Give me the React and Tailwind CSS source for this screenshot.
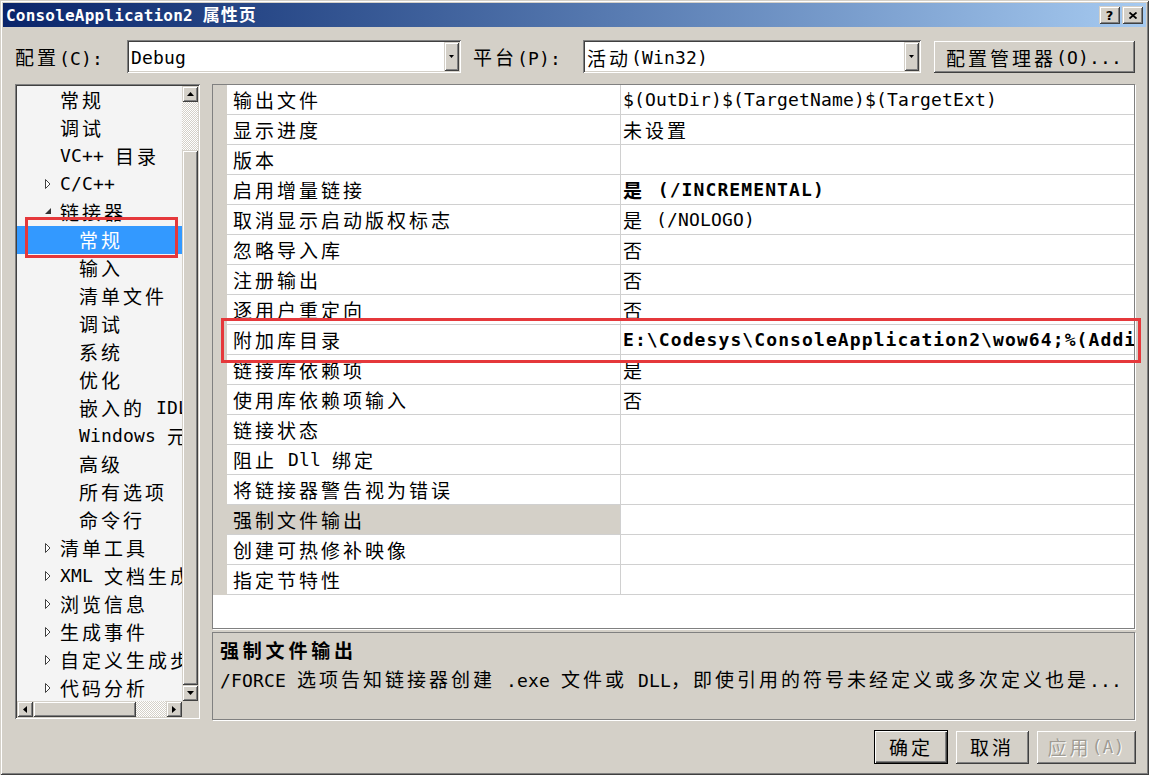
import React from "react";

const ASCII = /^[\x00-\x7f]+$/;

function Txt({ t, bold = false, lat, cjk }) {
  const parts = t.split(/([\x00-\x7f]+)/).filter(Boolean);
  const latC = lat || (bold ? "text-[18px] tracking-[1.1px]" : "text-[18px] tracking-[0.16px]");
  const cjkC = cjk || (bold ? "text-[19px] tracking-[3.8px]" : "text-[19px] tracking-[3px]");
  return (
    <>
      {parts.map((p, i) =>
        ASCII.test(p) ? (
          <span key={i} className={"font-['DejaVu_Sans_Mono',monospace] whitespace-pre " + latC}>
            {p}
          </span>
        ) : (
          <span key={i} className={"font-['Noto_Sans_CJK_SC',sans-serif] whitespace-pre " + cjkC}>
            {p}
          </span>
        )
      )}
    </>
  );
}

const RAISED =
  "bg-[#d4d0c8] shadow-[inset_1px_1px_0_#d4d0c8,inset_-1px_-1px_0_#404040,inset_2px_2px_0_#ffffff,inset_-2px_-2px_0_#808080]";
const SUNKEN =
  "shadow-[inset_1px_1px_0_#808080,inset_-1px_-1px_0_#ffffff,inset_2px_2px_0_#404040,inset_-2px_-2px_0_#d4d0c8]";
const DITHER =
  "bg-[repeating-conic-gradient(#d4d0c8_0_25%,#ffffff_0_50%)] bg-[length:2px_2px]";

function Arrow({ dir }) {
  const d = {
    up: "M3.5 0 L7 4 L0 4 Z",
    down: "M0 0 L7 0 L3.5 4 Z",
    left: "M4 0 L4 7 L0 3.5 Z",
    right: "M0 0 L4 3.5 L0 7 Z",
  }[dir];
  const vert = dir === "up" || dir === "down";
  return (
    <svg width={vert ? 7 : 4} height={vert ? 4 : 7} viewBox={vert ? "0 0 7 4" : "0 0 4 7"}>
      <path d={d} fill="#000" />
    </svg>
  );
}

function ScrollBtn({ dir }) {
  return (
    <div className={"w-[16px] h-[16px] shrink-0 flex items-center justify-center " + RAISED}>
      <Arrow dir={dir} />
    </div>
  );
}

function Combo({ w, text }) {
  return (
    <div className={"h-[33px] bg-white flex items-stretch p-[2px] " + SUNKEN + " " + w}>
      <div className="flex-1 flex items-center pl-[2px] pt-[3px] leading-[22px] text-black">
        <Txt t={text} />
      </div>
      <div className={"w-[15px] flex items-center justify-center " + RAISED}>
        <svg width="5" height="3" viewBox="0 0 5 3">
          <path d="M0 0 L5 0 L2.5 3 Z" fill="#000" />
        </svg>
      </div>
    </div>
  );
}

const tree = [
  { t: "常规", l: 1 },
  { t: "调试", l: 1 },
  { t: "VC++ 目录", l: 1 },
  { t: "C/C++", l: 1, a: "c" },
  { t: "链接器", l: 1, a: "e" },
  { t: "常规", l: 2, sel: true },
  { t: "输入", l: 2 },
  { t: "清单文件", l: 2 },
  { t: "调试", l: 2 },
  { t: "系统", l: 2 },
  { t: "优化", l: 2 },
  { t: "嵌入的 IDL", l: 2 },
  { t: "Windows 元数据", l: 2 },
  { t: "高级", l: 2 },
  { t: "所有选项", l: 2 },
  { t: "命令行", l: 2 },
  { t: "清单工具", l: 1, a: "c" },
  { t: "XML 文档生成器", l: 1, a: "c" },
  { t: "浏览信息", l: 1, a: "c" },
  { t: "生成事件", l: 1, a: "c" },
  { t: "自定义生成步骤", l: 1, a: "c" },
  { t: "代码分析", l: 1, a: "c" },
];

const rows = [
  ["输出文件", "$(OutDir)$(TargetName)$(TargetExt)"],
  ["显示进度", "未设置"],
  ["版本", ""],
  ["启用增量链接", "是 (/INCREMENTAL)", true],
  ["取消显示启动版权标志", "是 (/NOLOGO)"],
  ["忽略导入库", "否"],
  ["注册输出", "否"],
  ["逐用户重定向", "否"],
  ["附加库目录", "E:\\Codesys\\ConsoleApplication2\\wow64;%(AdditionalLibraryDirectories)", true],
  ["链接库依赖项", "是"],
  ["使用库依赖项输入", "否"],
  ["链接状态", ""],
  ["阻止 Dll 绑定", ""],
  ["将链接器警告视为错误", ""],
  ["强制文件输出", "", false, true],
  ["创建可热修补映像", ""],
  ["指定节特性", ""],
];

function TreeItem({ item }) {
  return (
    <div
      className={
        "h-[28px] flex items-center leading-[22px] whitespace-nowrap " +
        (item.sel ? "bg-[#3399ff] text-white" : "text-black")
      }
    >
      {item.l === 1 ? (
        <>
          <div className="w-[43px] shrink-0 flex justify-end pr-[9px]">
            {item.a === "c" && (
              <svg width="6" height="10" viewBox="0 0 6 10">
                <path d="M0.5 0.5 L5 5 L0.5 9.5 Z" fill="#ffffff" stroke="#404040" strokeWidth="1" />
              </svg>
            )}
            {item.a === "e" && (
              <svg width="6" height="6" viewBox="0 0 6 6" className="-mt-[2px]">
                <path d="M6 0 L6 6 L0 6 Z" fill="#333333" />
              </svg>
            )}
          </div>
          <Txt t={item.t} />
        </>
      ) : (
        <>
          <div className="w-[62px] shrink-0" />
          <Txt t={item.t} />
        </>
      )}
    </div>
  );
}

function Button({ children, def, disabled, w }) {
  return (
    <div
      className={
        "flex items-center justify-center leading-[22px] " +
        w +
        " " +
        (def
          ? "bg-[#d4d0c8] border border-black shadow-[inset_1px_1px_0_#ffffff,inset_-1px_-1px_0_#404040,inset_-2px_-2px_0_#808080]"
          : RAISED) +
        (disabled ? " text-[#a09c94] [text-shadow:1px_1px_0_#ffffff]" : " text-black")
      }
    >
      {children}
    </div>
  );
}

export default function App() {
  return (
    <div
      className={
        "relative w-[1149px] h-[775px] bg-[#d4d0c8] p-[3px] flex flex-col overflow-hidden font-['Noto_Sans_CJK_SC',sans-serif] shadow-[inset_1px_1px_0_#d4d0c8,inset_-1px_-1px_0_#404040,inset_2px_2px_0_#ffffff,inset_-2px_-2px_0_#808080]"
      }
    >
      {/* Title bar */}
      <div className="h-[24px] shrink-0 flex items-center justify-between bg-linear-to-r from-[#0a246a] to-[#a6caf0] pl-[3px] pr-[3px]">
        <div className="text-white font-bold leading-[24px] whitespace-nowrap">
          <Txt t="ConsoleApplication2 属性页" lat="text-[16px] tracking-[0.2px]" cjk="text-[17px] tracking-[1px]" />
        </div>
        <div className="flex gap-[2px]">
          <div className={"w-[21px] h-[18px] flex items-center justify-center " + RAISED}>
            <span className="font-['DejaVu_Sans',sans-serif] font-bold text-[13px] leading-none text-black">?</span>
          </div>
          <div className={"w-[21px] h-[18px] flex items-center justify-center " + RAISED}>
            <svg width="8" height="7" viewBox="0 0 8 7">
              <path d="M0.5 0.5 L7.5 6.5 M7.5 0.5 L0.5 6.5" stroke="#000" strokeWidth="1.8" />
            </svg>
          </div>
        </div>
      </div>

      {/* Config row */}
      <div className="mt-[13px] h-[33px] shrink-0 flex items-center pl-[12px]">
        <div className="w-[112px] pt-[3px] leading-[22px] text-black whitespace-nowrap">
          <Txt t="配置(C):" />
        </div>
        <Combo w="w-[334px]" text="Debug" />
        <div className="w-[122px] pl-[12px] pt-[3px] leading-[22px] text-black whitespace-nowrap">
          <Txt t="平台(P):" />
        </div>
        <Combo w="w-[338px]" text="活动(Win32)" />
        <div className="w-[12px]" />
        <Button w="w-[202px] h-[33px] pt-[3px]">
          <Txt t="配置管理器(O)..." />
        </Button>
      </div>

      {/* Main area */}
      <div className="mt-[11px] flex pl-[12px]">
        {/* Tree */}
        <div className={"w-[185px] h-[635px] bg-[#f4f4f4] p-[2px] flex flex-col " + SUNKEN}>
          <div className="flex flex-1 min-h-0">
            <div className="flex-1 min-w-0 overflow-hidden">
              {tree.map((it, i) => (
                <TreeItem key={i} item={it} />
              ))}
            </div>
            <div className="w-[16px] flex flex-col">
              <ScrollBtn dir="up" />
              <div className={"h-[48px] " + DITHER} />
              <div className={"flex-1 " + RAISED} />
              <ScrollBtn dir="down" />
            </div>
          </div>
          <div className="h-[16px] flex">
            <ScrollBtn dir="left" />
            <div className={"w-[103px] " + RAISED} />
            <div className={"flex-1 " + DITHER} />
            <ScrollBtn dir="right" />
            <div className="w-[16px] bg-[#d4d0c8]" />
          </div>
        </div>

        {/* Right column */}
        <div className="ml-[12px] w-[923px] flex flex-col">
          <div className="h-[545px] border border-[#808080] bg-white shadow-[1px_1px_0_#ffffff] overflow-hidden">
            <div className="flex">
              <div className="w-[14px] shrink-0 bg-[#d4d0c8]" />
              <div className="flex-1 min-w-0">
                {rows.map(([name, val, bold, selName], i) => (
                  <div key={i} className="h-[30px] flex border-b border-[#d0d0d0] leading-[22px] text-black">
                    <div
                      className={
                        "w-[394px] shrink-0 border-r border-[#d0d0d0] pl-[6px] flex items-center whitespace-nowrap " +
                        (selName ? "bg-[#d4d0c8]" : "")
                      }
                    >
                      <Txt t={name} />
                    </div>
                    <div
                      className={
                        "flex-1 min-w-0 pl-[2px] flex items-center whitespace-nowrap overflow-hidden " +
                        (bold ? "font-bold" : "")
                      }
                    >
                      <Txt t={val} bold={!!bold} />
                    </div>
                  </div>
                ))}
              </div>
            </div>
          </div>

          <div className="mt-[3px] h-[88px] border border-[#808080] shadow-[1px_1px_0_#ffffff] px-[7px] pt-[3px] leading-[28px] text-black overflow-hidden">
            <div className="font-bold whitespace-nowrap">
              <Txt t="强制文件输出" bold />
            </div>
            <div className="whitespace-nowrap">
              <Txt t="/FORCE 选项告知链接器创建 .exe 文件或 DLL，即使引用的符号未经定义或多次定义也是..." />
            </div>
          </div>
        </div>
      </div>

      {/* Buttons */}
      <div className="mt-[10px] flex justify-end gap-[7px] pr-[10px]">
        <Button def w="w-[74px] h-[34px]">
          <Txt t="确定" />
        </Button>
        <Button w="w-[74px] h-[34px]">
          <Txt t="取消" />
        </Button>
        <Button disabled w="w-[100px] h-[34px]">
          <Txt t="应用(A)" />
        </Button>
      </div>

      {/* Annotation boxes */}
      <div className="absolute left-[25px] top-[217px] w-[153px] h-[41px] border-[3px] border-[#e5383b] pointer-events-none" />
      <div className="absolute left-[221px] top-[318px] w-[920px] h-[45px] border-[3px] border-[#e5383b] pointer-events-none" />
    </div>
  );
}
